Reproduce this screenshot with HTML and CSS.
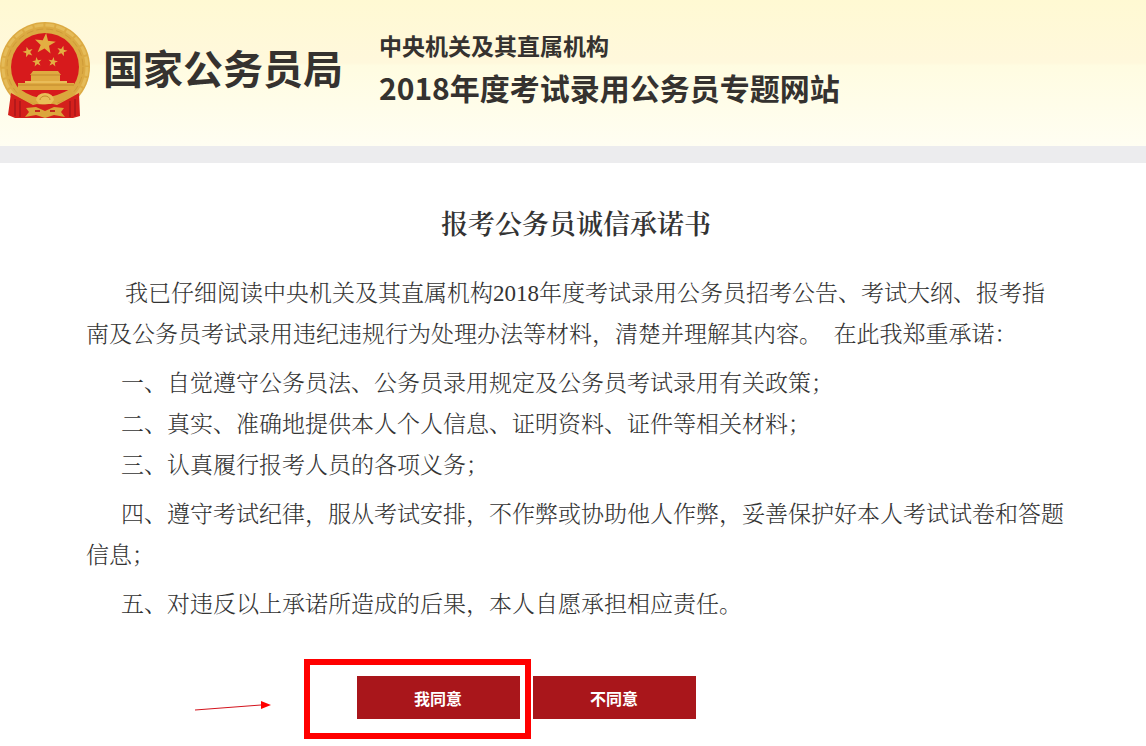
FILE: index.html
```
<!DOCTYPE html>
<html lang="zh-CN">
  <head>
    <meta charset="UTF-8" />
    <meta name="viewport" content="width=device-width, initial-scale=1.0" />
    <title>报考公务员诚信承诺书</title>
    <link rel="stylesheet" href="styles.css">
  </head>
  <body>
    <header class="header">
      <svg class="emblem" viewBox="0 0 92 98" role="img" aria-label="国徽">
        <defs>
          <path id="star" d="M0-10 2.4-3.2 9.5-3.1 3.8 1.2 5.9 8.1 0 4-5.9 8.1-3.8 1.2-9.5-3.1-2.4-3.2Z" />
        </defs>
        <!-- 麦穗外圈 -->
        <circle cx="45" cy="46" r="45" fill="#dcaa42" />
        <circle cx="45" cy="46" r="42" fill="none" stroke="#e5bb58" stroke-width="3" stroke-dasharray="9 2" />
        <circle cx="45" cy="46" r="38" fill="none" stroke="#cf9a38" stroke-width="1" stroke-dasharray="7 3" />
        <circle cx="45" cy="46" r="34" fill="#d71a1c" />
        <!-- 五星 -->
        <g fill="#e3ae42">
          <use href="#star" transform="translate(45 23) rotate(6) scale(1.1)" />
          <use href="#star" transform="translate(28 31) rotate(-15) scale(.55)" />
          <use href="#star" transform="translate(62 30) rotate(15) scale(.55)" />
          <use href="#star" transform="translate(37 41) rotate(-8) scale(.5)" />
          <use href="#star" transform="translate(53 41) rotate(8) scale(.5)" />
        </g>
        <!-- 天安门 -->
        <path d="M33 50h25l3 4H30zM31 54h29v6H31zM18 62h56v7H18z" fill="#dfaa41" />
        <path d="M25 60h42v2H25z" fill="#e9bc58" />
        <path d="M31 54h29M18 64h56" stroke="#c28a2c" fill="none" />
        <!-- 绶带 -->
        <path d="M11 72 20 77 33 84 45 81 57 84 70 77 79 72 80 95 73 97 15 97 8 94Z" fill="#d4201c" />
        <path d="M15 78v17M20 80v16M70 80v16M75 78v17" stroke="#b5181a" stroke-width="2" />
        <path d="M18 71Q32 81 45 80T72 71" stroke="#dba73d" stroke-width="7" fill="none" />
        <path d="M36 79a9 7 0 0 1 18 0l-3 4H39z" fill="#e9bf58" />
        <path d="M40 79a5 4 0 0 1 10 0" stroke="#c28a2c" fill="none" />
        <path d="M26 87 36 86 45 90 54 86 64 87 61 91 65 96 54 94 45 97 36 94 25 96 29 91Z" fill="#dca63b" />
        <path d="M35 90h5M50 90h5" stroke="#c42a1c" stroke-width="2" />
      </svg>
      <div class="org-name">国家公务员局</div>
      <div class="site-name">
        <p class="site-org">中央机关及其直属机构</p>
        <p class="site-title">2018年度考试录用公务员专题网站</p>
      </div>
    </header>

    <main class="content">
      <h1>报考公务员诚信承诺书</h1>
      <p class="intro">我已仔细阅读中央机关及其直属机构2018年度考试录用公务员招考公告、考试大纲、报考指南及公务员考试录用违纪违规行为处理办法等材料，清楚并理解其内容。&nbsp; 在此我郑重承诺：</p>
      <div class="group">
        <p>一、自觉遵守公务员法、公务员录用规定及公务员考试录用有关政策；</p>
        <p>二、真实、准确地提供本人个人信息、证明资料、证件等相关材料；</p>
        <p>三、认真履行报考人员的各项义务；</p>
      </div>
      <p>四、遵守考试纪律，服从考试安排，不作弊或协助他人作弊，妥善保护好本人考试试卷和答题信息；</p>
      <p>五、对违反以上承诺所造成的后果，本人自愿承担相应责任。</p>

      <div class="actions">
        <div class="agree">
          <button class="btn" type="button">我同意</button>
          <span class="highlight"></span>
          <svg class="arrow" viewBox="0 0 78 12" aria-hidden="true">
            <path d="M1 10 67 5" stroke="#d3131c" fill="none" />
            <path d="M67 1 77 5 67 9Z" fill="#f00" />
          </svg>
        </div>
        <button class="btn" type="button">不同意</button>
      </div>
    </main>
  </body>
</html>
```

FILE: styles.css
```
body {
  margin: 0;
  background-color: #ffffff;
  color: #333333;
  font-family: "Noto Sans CJK SC", sans-serif;
}
h1,
p {
  margin: 0;
}
.header {
  display: flex;
  align-items: center;
  height: 146px;
  background: linear-gradient(#fff9d3, #fff8dc 43%, #fffce1 45%, #fffef2);
  border-bottom: 17px solid #ececee;
  color: #35322f;
  font-weight: bold;
}
.emblem {
  width: 92px;
  height: 98px;
  margin-right: 11px;
  margin-bottom: 6px;
}
.org-name {
  font-size: 40px;
  line-height: 48px;
  margin-right: 36px;
  margin-bottom: 12px;
}
.site-name {
  margin-bottom: 12px;
}
.site-org {
  font-size: 23px;
  line-height: 40px;
}
.site-title {
  font-size: 30px;
  line-height: 44px;
}
.content {
  padding: 42px 80px 0 86px;
  font-family: "Liberation Serif", "Noto Serif CJK SC", "Noto Sans CJK SC", serif;
  font-size: 23px;
  font-weight: 300;
  line-height: 41px;
}
.content h1 {
  font-size: 27px;
  font-weight: 600;
  line-height: 40px;
  text-align: center;
  margin-bottom: 28px;
}
.content p {
  text-indent: 35px;
}
.content > p,
.group {
  margin-bottom: 8px;
}
.content .intro {
  text-indent: 39px;
}
.actions {
  display: flex;
  justify-content: center;
  gap: 13px;
  padding: 43px 100px 27px 0;
}
.agree {
  position: relative;
}
.btn {
  display: block;
  width: 163px;
  height: 43px;
  padding: 0;
  border: none;
  background-color: #a9161b;
  color: #ffffff;
  font-family: "Noto Sans CJK SC", sans-serif;
  font-size: 16px;
  font-weight: bold;
  cursor: pointer;
}
.btn:hover {
  background-color: #8f1015;
}
.highlight {
  position: absolute;
  top: -17px;
  right: -11px;
  bottom: -20px;
  left: -53px;
  border: 6px solid #ff0000;
  pointer-events: none;
}
.arrow {
  position: absolute;
  top: 24px;
  left: -163px;
  width: 78px;
  height: 12px;
}
```
